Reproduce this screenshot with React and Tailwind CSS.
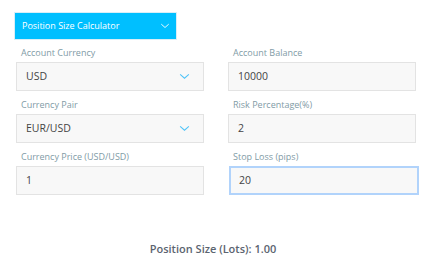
import { useState } from "react";

const font = { fontFamily: '"Open Sans", "Noto Sans", sans-serif' };

function Chevron({ className }) {
    return (
        <svg viewBox="0 0 12 8" className={className} fill="none" stroke="currentColor" strokeWidth="1.2">
            <path d="M1 1.5 L6 6 L11 1.5" />
        </svg>
    );
}

function Field({ label, children }) {
    return (
        <div className="flex flex-col">
            <label className="text-[9px] leading-[14px] text-[#7f9ba6] mb-[2px] pl-[5px]">{label}</label>
            {children}
        </div>
    );
}

function SelectBox({ value }) {
    return (
        <div className="h-[29px] flex items-center justify-between border border-[#e3e3e3] bg-[#f8f8f8] pl-[9px] pr-[13px] text-[10.5px] text-[#444]">
            <span>{value}</span>
            <Chevron className="w-[11px] h-[7px] text-[#4fc3f7]" />
        </div>
    );
}

function InputBox({ value, focused }) {
    return (
        <div
            className={
                focused
                    ? "h-[29px] flex items-center border-2 border-[#b1d3fb] bg-[#f8f8f8] pl-[8px] text-[10.5px] text-[#444] ml-[1px] mr-[-3px]"
                    : "h-[29px] flex items-center border border-[#e3e3e3] bg-[#f8f8f8] pl-[9px] text-[10.5px] text-[#444]"
            }
        >
            {value}
        </div>
    );
}

export default function App() {
    const [open] = useState(false);

    return (
        <div style={font} className="w-[432px] h-[258px] bg-white relative overflow-hidden">
            <div className="pt-[12px] pl-[14px]">
                <div className="w-[163px] h-[28px] bg-[#00bfff] border border-[#d9eef7] flex items-center justify-between pl-[7px] pr-[6px] text-white text-[9px]">
                    <span>Position Size Calculator</span>
                    <Chevron className={open ? "w-[10px] h-[6px] rotate-180" : "w-[10px] h-[6px]"} />
                </div>
            </div>
            <div className="grid grid-cols-2 gap-x-[24px] gap-y-[7px] pl-[16px] pr-[16px] mt-[6px]">
                <Field label="Account Currency">
                    <SelectBox value="USD" />
                </Field>
                <Field label="Account Balance">
                    <InputBox value="10000" />
                </Field>
                <Field label="Currency Pair">
                    <SelectBox value="EUR/USD" />
                </Field>
                <Field label="Risk Percentage(%)">
                    <InputBox value="2" />
                </Field>
                <Field label="Currency Price (USD/USD)">
                    <InputBox value="1" />
                </Field>
                <Field label="Stop Loss (pips)">
                    <InputBox value="20" focused />
                </Field>
            </div>
            <div className="mt-[46px] text-center text-[11px] font-semibold text-[#5b6470] pr-[6px]">
                Position Size (Lots): 1.00
            </div>
        </div>
    );
}
